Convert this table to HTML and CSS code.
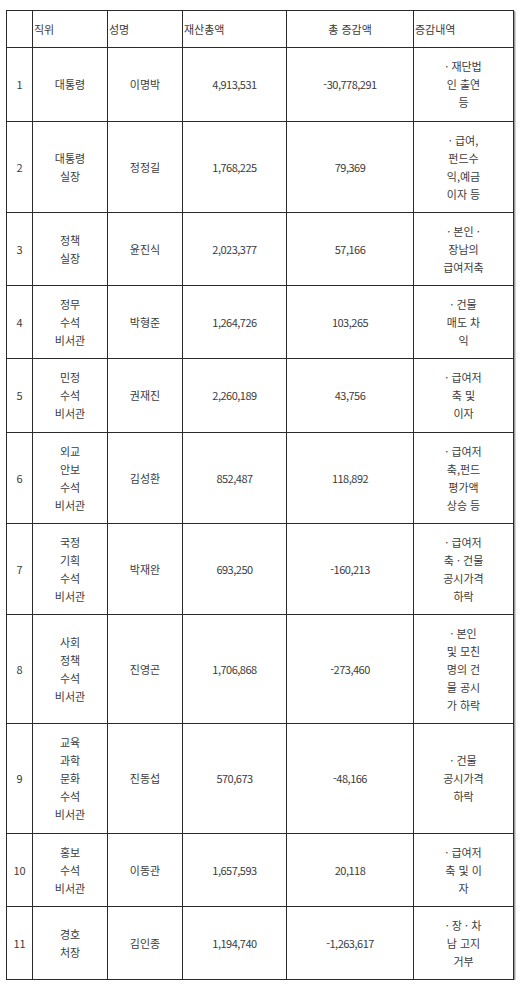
FILE: index.html
```html
<!DOCTYPE html>
<html lang="ko">
<head>
<meta charset="utf-8">
<title>재산 증감 내역</title>
<link rel="stylesheet" href="styles.css">
</head>
<body>
<table class="assets">
  <colgroup>
    <col class="c-no">
    <col class="c-pos">
    <col class="c-name">
    <col class="c-total">
    <col class="c-diff">
    <col class="c-note">
  </colgroup>
  <thead>
    <tr>
      <th class="h-left"></th>
      <th class="h-left">직위</th>
      <th class="h-left">성명</th>
      <th class="h-left">재산총액</th>
      <th class="h-center">총 증감액</th>
      <th class="h-left">증감내역</th>
    </tr>
  </thead>
  <tbody>
    <tr>
      <td>1</td><td>대통령</td><td>이명박</td><td class="num">4,913,531</td><td class="num">-30,778,291</td>
      <td>· 재단법<br>인 출연<br>등</td>
    </tr>
    <tr>
      <td>2</td><td>대통령<br>실장</td><td>정정길</td><td class="num">1,768,225</td><td class="num">79,369</td>
      <td>· 급여,<br>펀드수<br>익,예금<br>이자 등</td>
    </tr>
    <tr>
      <td>3</td><td>정책<br>실장</td><td>윤진식</td><td class="num">2,023,377</td><td class="num">57,166</td>
      <td>· 본인 ·<br>장남의<br>급여저축</td>
    </tr>
    <tr>
      <td>4</td><td>정무<br>수석<br>비서관</td><td>박형준</td><td class="num">1,264,726</td><td class="num">103,265</td>
      <td>· 건물<br>매도 차<br>익</td>
    </tr>
    <tr>
      <td>5</td><td>민정<br>수석<br>비서관</td><td>권재진</td><td class="num">2,260,189</td><td class="num">43,756</td>
      <td>· 급여저<br>축 및<br>이자</td>
    </tr>
    <tr>
      <td>6</td><td>외교<br>안보<br>수석<br>비서관</td><td>김성환</td><td class="num">852,487</td><td class="num">118,892</td>
      <td>· 급여저<br>축,펀드<br>평가액<br>상승 등</td>
    </tr>
    <tr>
      <td>7</td><td>국정<br>기획<br>수석<br>비서관</td><td>박재완</td><td class="num">693,250</td><td class="num">-160,213</td>
      <td>· 급여저<br>축 · 건물<br>공시가격<br>하락</td>
    </tr>
    <tr>
      <td>8</td><td>사회<br>정책<br>수석<br>비서관</td><td>진영곤</td><td class="num">1,706,868</td><td class="num">-273,460</td>
      <td>· 본인<br>및 모친<br>명의 건<br>물 공시<br>가 하락</td>
    </tr>
    <tr>
      <td>9</td><td>교육<br>과학<br>문화<br>수석<br>비서관</td><td>진동섭</td><td class="num">570,673</td><td class="num">-48,166</td>
      <td>· 건물<br>공시가격<br>하락</td>
    </tr>
    <tr>
      <td>10</td><td>홍보<br>수석<br>비서관</td><td>이동관</td><td class="num">1,657,593</td><td class="num">20,118</td>
      <td>· 급여저<br>축 및 이<br>자</td>
    </tr>
    <tr>
      <td>11</td><td>경호<br>처장</td><td>김인종</td><td class="num">1,194,740</td><td class="num">-1,263,617</td>
      <td>· 장 · 차<br>남 고지<br>거부</td>
    </tr>
  </tbody>
</table>
</body>
</html>
```

FILE: styles.css
```css
html, body {
  margin: 0;
  padding: 0;
  background: #ffffff;
}

body {
  padding: 10px 0 0 6px;
  font-family: "Noto Sans CJK KR", "Noto Sans", sans-serif;
  font-size: 11px;
  color: #3c3c3c;
}

.assets {
  border-collapse: collapse;
  table-layout: fixed;
  width: 507px;
  box-shadow: 1px 1px 0 #9c9c9c, 2px 2px 0 #d0d0d0;
}

.c-no { width: 26px; }
.c-pos { width: 75px; }
.c-name { width: 75px; }
.c-total { width: 104px; }
.c-diff { width: 127px; }
.c-note { width: 100px; }

.assets th,
.assets td {
  border: 1px solid #2a2a2a;
  line-height: 18px;
  padding: 9px 1px 9.25px;
  vertical-align: middle;
  font-weight: normal;
}

.assets td {
  text-align: center;
}

.assets th.h-left {
  text-align: left;
}

.assets th.h-center {
  text-align: center;
}

.assets td.num {
  letter-spacing: -0.5px;
}
```
